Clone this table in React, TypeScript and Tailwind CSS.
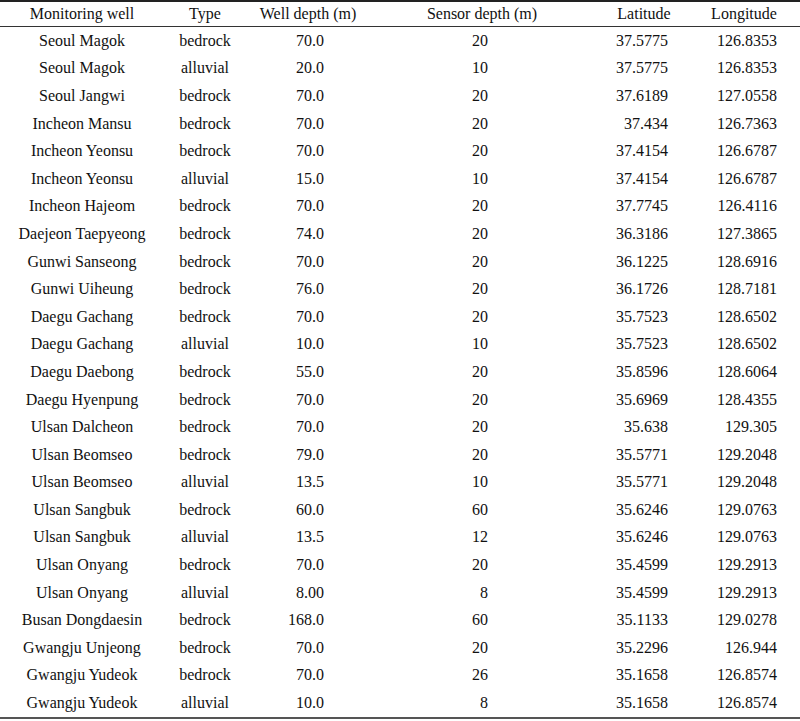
import React from "react";

const rows: [string, string, string, string, string, string][] = [
  ["Seoul Magok", "bedrock", "70.0", "20", "37.5775", "126.8353"],
  ["Seoul Magok", "alluvial", "20.0", "10", "37.5775", "126.8353"],
  ["Seoul Jangwi", "bedrock", "70.0", "20", "37.6189", "127.0558"],
  ["Incheon Mansu", "bedrock", "70.0", "20", "37.434", "126.7363"],
  ["Incheon Yeonsu", "bedrock", "70.0", "20", "37.4154", "126.6787"],
  ["Incheon Yeonsu", "alluvial", "15.0", "10", "37.4154", "126.6787"],
  ["Incheon Hajeom", "bedrock", "70.0", "20", "37.7745", "126.4116"],
  ["Daejeon Taepyeong", "bedrock", "74.0", "20", "36.3186", "127.3865"],
  ["Gunwi Sanseong", "bedrock", "70.0", "20", "36.1225", "128.6916"],
  ["Gunwi Uiheung", "bedrock", "76.0", "20", "36.1726", "128.7181"],
  ["Daegu Gachang", "bedrock", "70.0", "20", "35.7523", "128.6502"],
  ["Daegu Gachang", "alluvial", "10.0", "10", "35.7523", "128.6502"],
  ["Daegu Daebong", "bedrock", "55.0", "20", "35.8596", "128.6064"],
  ["Daegu Hyenpung", "bedrock", "70.0", "20", "35.6969", "128.4355"],
  ["Ulsan Dalcheon", "bedrock", "70.0", "20", "35.638", "129.305"],
  ["Ulsan Beomseo", "bedrock", "79.0", "20", "35.5771", "129.2048"],
  ["Ulsan Beomseo", "alluvial", "13.5", "10", "35.5771", "129.2048"],
  ["Ulsan Sangbuk", "bedrock", "60.0", "60", "35.6246", "129.0763"],
  ["Ulsan Sangbuk", "alluvial", "13.5", "12", "35.6246", "129.0763"],
  ["Ulsan Onyang", "bedrock", "70.0", "20", "35.4599", "129.2913"],
  ["Ulsan Onyang", "alluvial", "8.00", "8", "35.4599", "129.2913"],
  ["Busan Dongdaesin", "bedrock", "168.0", "60", "35.1133", "129.0278"],
  ["Gwangju Unjeong", "bedrock", "70.0", "20", "35.2296", "126.944"],
  ["Gwangju Yudeok", "bedrock", "70.0", "26", "35.1658", "126.8574"],
  ["Gwangju Yudeok", "alluvial", "10.0", "8", "35.1658", "126.8574"],
];

const grid = "grid grid-cols-[164px_82px_124px_224px_100px_100px]";

export default function App() {
  return (
    <div
      className="w-[800px] h-[721px] bg-white text-[#111] text-[16px] leading-none"
      style={{ fontFamily: '"Liberation Serif", "Times New Roman", serif' }}
    >
      <div className="border-t-2 border-b-2 border-t-[#222] border-b-[#555]">
        <div className={`${grid} h-[25px] items-center border-b border-[#333]`}>
          <div className="text-center">Monitoring well</div>
          <div className="text-center">Type</div>
          <div className="text-center">Well depth (m)</div>
          <div className="text-center">Sensor depth (m)</div>
          <div className="text-center">Latitude</div>
          <div className="text-center">Longitude</div>
        </div>
        {rows.map((r, i) => (
          <div key={i} className={`${grid} h-[27.6px] items-center`}>
            <div className="text-center">{r[0]}</div>
            <div className="text-center">{r[1]}</div>
            <div className="text-right pr-[46px]">{r[2]}</div>
            <div className="text-right pr-[106px]">{r[3]}</div>
            <div className="text-right pr-[26px]">{r[4]}</div>
            <div className="text-right pr-[17px]">{r[5]}</div>
          </div>
        ))}
      </div>
    </div>
  );
}
